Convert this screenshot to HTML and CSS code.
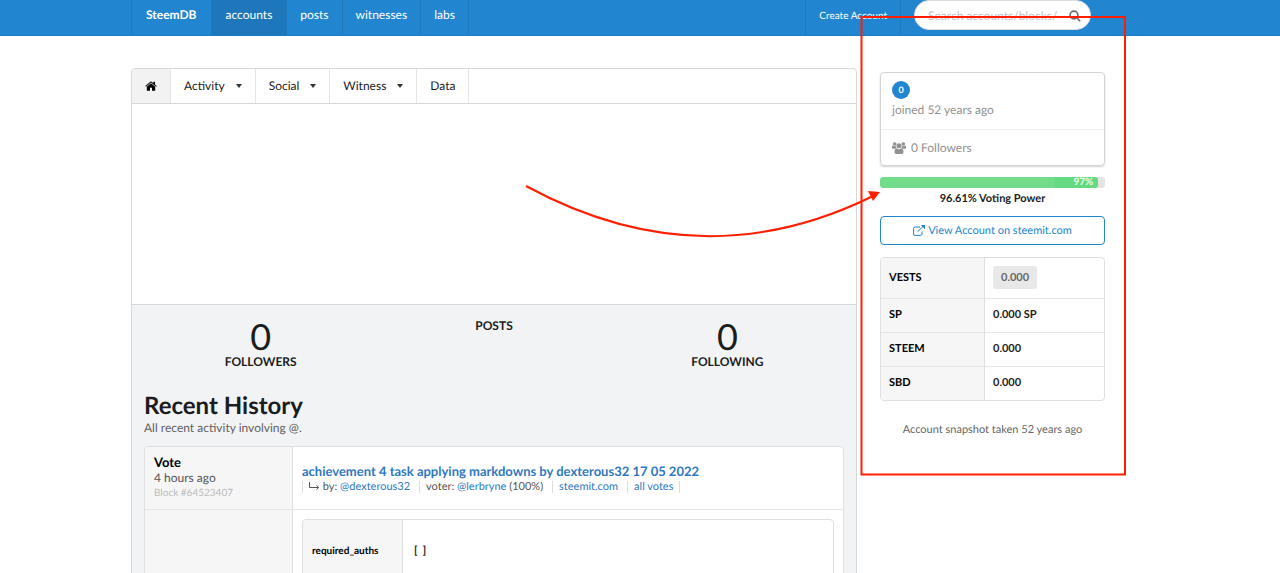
FILE: index.html
```
<!DOCTYPE html>
<html lang="en">
<head>
<meta charset="utf-8">
<title>SteemDB</title>
<link rel="stylesheet" href="styles.css">
</head>
<body>
<div class="page">
  <header class="topbar">
    <nav class="container topnav">
      <a class="nav-item brand" href="#">SteemDB</a>
      <a class="nav-item active" href="#">accounts</a>
      <a class="nav-item" href="#">posts</a>
      <a class="nav-item" href="#">witnesses</a>
      <a class="nav-item" href="#">labs</a>
      <a class="nav-item create" href="#">Create Account</a>
      <form class="search">
        <input class="search-input" type="text" aria-label="Search" placeholder="Search accounts/blocks/transactions">
        <svg class="search-icon" viewBox="0 0 12 12" aria-hidden="true"><circle cx="5" cy="5" r="3.9"/><path d="M8 8l3.2 3.2"/></svg>
      </form>
    </nav>
  </header>

  <div class="container body">
    <main class="main">
      <nav class="tabs">
        <a class="tab home" href="#" aria-label="Home"><svg class="home-icon" viewBox="0 0 12 10" aria-hidden="true"><path d="M6 2.300 10.200 5.800V9.200Q10.200 9.700 9.700 9.700H7V6.800H5V9.700H2.300Q1.800 9.700 1.800 9.200V5.800Z"/><path d="M0.300 5.100 5.300.8Q6 .3 6.700.8L8.400 2.300V.8H10V3.600L11.700 5.100 11.100 5.800 6 1.500.9 5.800Z"/></svg></a>
        <button class="tab" type="button">Activity <span class="caret"></span></button>
        <button class="tab" type="button">Social <span class="caret"></span></button>
        <button class="tab" type="button">Witness <span class="caret"></span></button>
        <a class="tab" href="#">Data</a>
      </nav>
      <div class="hero"></div>
      <section class="content">
        <div class="stats">
          <div class="stat"><span class="value">0</span><span class="label">FOLLOWERS</span></div>
          <div class="stat"><span class="label">POSTS</span></div>
          <div class="stat"><span class="value">0</span><span class="label">FOLLOWING</span></div>
        </div>
        <h1 class="title">Recent History</h1>
        <p class="subtitle">All recent activity involving @.</p>
        <table class="history">
          <tr>
            <th class="when" scope="row">
              <span class="kind">Vote</span>
              <span class="ago">4 hours ago</span>
              <span class="block">Block #64523407</span>
            </th>
            <td class="what">
              <a class="post" href="#">achievement 4 task applying markdowns by dexterous32 17 05 2022</a>
              <div class="meta">
                <span class="meta-item"><svg class="reply-icon" viewBox="0 0 11 8" aria-hidden="true"><path d="M.5 0V5.500H9.500M7.500 3.500l2.300 2-2.300 2"/></svg> by: <a href="#">@dexterous32</a></span>
                <span class="meta-item">voter: <a href="#">@lerbryne</a> (100%)</span>
                <span class="meta-item"><a href="#">steemit.com</a></span>
                <span class="meta-item last"><a href="#">all votes</a></span>
              </div>
            </td>
          </tr>
          <tr>
            <th class="when" scope="row"></th>
            <td class="what detail">
              <table class="params">
                <tr><th scope="row">required_auths</th><td>[&nbsp; ]</td></tr>
              </table>
            </td>
          </tr>
        </table>
      </section>
    </main>

    <aside class="side">
      <section class="card">
        <div class="card-top"><span class="badge">0</span><span>joined 52 years ago</span></div>
        <div class="card-bottom">
          <svg class="users-icon" viewBox="0 0 14 12" aria-hidden="true"><circle cx="2.700" cy="2" r="1.800"/><circle cx="11.300" cy="2" r="1.800"/><circle cx="7" cy="3.800" r="2.500"/><path d="M0 6V5Q0 3.600.8 3.600 2.500 4.600 3.800 3.800 3.800 5 4.600 6Q3.500 6 2.700 6.800H1Q0 6.800 0 6ZM14 6V5Q14 3.600 13.200 3.600 11.500 4.600 10.200 3.800 10.200 5 9.400 6 10.500 6 11.300 6.800H13Q14 6.800 14 6ZM2.500 10.200Q2.500 6.600 4.500 6.300 7 8.100 9.500 6.300 11.500 6.600 11.500 10.200 11.500 12 9.800 12H4.200Q2.500 12 2.500 10.200Z"/></svg>
          0 Followers
        </div>
      </section>
      <div class="progress"><div class="bar" style="width:97%">97%</div></div>
      <p class="power">96.61% Voting Power</p>
      <a class="view" href="#"><svg class="ext-icon" viewBox="0 0 12 11" aria-hidden="true"><path d="M7 2H2Q.6 2 .6 3.400V9Q.6 10.400 2 10.400H7.600Q9 10.400 9 9V6.500M4.500 6.800 10 1.400"/><path class="solid" d="M7.800 0H12V4.200Z"/></svg>View Account on steemit.com</a>
      <table class="balances">
        <tr><th scope="row">VESTS</th><td><span class="chip">0.000</span></td></tr>
        <tr><th scope="row">SP</th><td>0.000 SP</td></tr>
        <tr><th scope="row">STEEM</th><td>0.000</td></tr>
        <tr><th scope="row">SBD</th><td>0.000</td></tr>
      </table>
      <p class="snapshot">Account snapshot taken 52 years ago</p>
    </aside>

    <svg class="annotation" viewBox="0 0 1018 500" aria-hidden="true"><rect x="730.500" y="17" width="263.500" height="457.500"/><path d="M395 186Q570 281 742 196"/><path class="head" d="M749 192 737 191 742 201Z"/></svg>
  </div>
</div>
</body>
</html>
```
FILE: styles.css
```
* { box-sizing: border-box; }
body {
  margin: 0;
  background: #fff;
  color: #1b1c1d;
  font-family: Lato, "Liberation Sans", sans-serif;
  font-size: 13px;
  line-height: 16px;
  text-rendering: geometricPrecision;
}
button, input { text-rendering: inherit; }
a { color: #2f78c2; text-decoration: none; }
p, h1 { margin: 0; }
svg { fill: currentColor; flex: none; }
table { width: 100%; border-collapse: separate; border-spacing: 0; }
.page { position: relative; height: 100vh; overflow: hidden; }
.container { width: 100%; max-width: 1018px; margin: 0 auto; }

.topbar { background: #2185d0; border-bottom: 1px solid #1b7cc8; }
.topnav { display: flex; height: 35px; border-left: 1px solid #1e78bc; }
.nav-item {
  padding: 7px 13px 0;
  color: #fff;
  font-size: 12px;
  border-right: 1px solid #1e78bc;
}
.brand { padding: 7px 14px 0; font-weight: 700; }
.active { padding: 7px 14px 0; background: #1e77ba; }
.create {
  margin-left: auto;
  padding-top: 8px;
  font-size: 10px;
  border-left: 1px solid #1e78bc;
}
.search { position: relative; width: 177px; margin: 0 58px 0 13px; }
.search-input {
  width: 100%;
  height: 30px;
  padding: 0 32px 0 13px;
  border: 1px solid #dcdddf;
  border-radius: 15px;
  background: #fff;
  font: 12px Lato, "Liberation Sans", sans-serif;
}
.search-input::placeholder { color: #c4c4c4; }
.search-icon {
  position: absolute;
  top: 10px;
  right: 10px;
  width: 12px;
  height: 12px;
  fill: none;
  stroke: #6b6b6b;
  stroke-width: 1.6;
}

.body { display: flex; align-items: flex-start; gap: 23px; padding: 32px 44px 0 0; }
.main { flex: 1; min-width: 0; }
.tabs {
  display: flex;
  height: 36px;
  border: 1px solid #d6d7d8;
  border-radius: 4px 4px 0 0;
  overflow: hidden;
}
.tab {
  display: flex;
  align-items: center;
  padding: 0 13px;
  border: 0;
  border-right: 1px solid #e4e4e5;
  background: #fff;
  color: #1b1c1d;
  font: inherit;
  font-size: 12px;
}
.home { background: #f2f2f2; color: #000; }
.home-icon { width: 12px; height: 10px; }
.caret {
  margin-left: 11px;
  border: 3px solid transparent;
  border-top: 4px solid #333;
  border-bottom: 0;
}
.hero { height: 201px; border: solid #d6d7d8; border-width: 0 1px 1px; }
.content {
  padding: 13px 12px 0;
  background: #f2f3f5;
  border: solid #d6d7d8;
  border-width: 0 1px;
}
.stats { display: grid; grid-template-columns: repeat(3, 1fr); text-align: center; }
.stat { display: flex; flex-direction: column; }
.value { font-size: 36px; line-height: 36px; }
.label { font-size: 12px; font-weight: 700; }
.title { margin-top: 21px; font-size: 24px; line-height: 29px; }
.subtitle { font-size: 12px; color: #5f6061; }
.history {
  margin-top: 10px;
  border: 1px solid #dedfe0;
  border-radius: 4px;
  background: #fff;
  overflow: hidden;
}
.when {
  width: 148px;
  padding: 8px 9px;
  background: #f6f6f6;
  border-right: 1px solid #dedfe0;
  text-align: left;
  vertical-align: top;
  font-weight: 400;
}
.kind, .ago, .block { display: block; line-height: 15px; }
.kind { font-weight: 700; color: #000; }
.ago { font-size: 12px; color: #555; }
.block { font-size: 10px; line-height: 16px; color: #bbb; }
.what { padding: 9px; }
.post { display: block; font-weight: 700; }
.meta { display: flex; font-size: 11px; color: #555; }
.meta-item {
  padding: 0 9px 0 6px;
  line-height: 12px;
  border-left: 1px solid #ddd;
  margin-top: 2px;
}
.last { padding-right: 6px; border-right: 1px solid #ddd; }
.reply-icon { width: 11px; height: 8px; fill: none; stroke: #555; }
.detail, .history tr + tr .when { border-top: 1px solid #e6e6e6; }
.params { border: 1px solid #dedfe0; border-radius: 4px; overflow: hidden; }
.params th, .params td { height: 62px; padding: 0 9px; font-size: 10px; text-align: left; }
.params th { width: 100px; background: #f6f6f6; color: #000; border-right: 1px solid #dedfe0; }
.params td { padding-left: 11px; font-size: 11px; font-weight: 700; }

.side { width: 225px; padding-top: 4px; }
.card {
  border: 1px solid #d4d4d5;
  border-radius: 4px;
  box-shadow: 0 1px 2px #d4d4d5;
  color: #919191;
  font-size: 12px;
}
.card-top { display: flex; flex-direction: column; gap: 3px; padding: 8px 11px 11px; }
.badge {
  width: 18px;
  height: 18px;
  border-radius: 50%;
  background: #2185d0;
  color: #fff;
  font-size: 9px;
  font-weight: 700;
  line-height: 18px;
  text-align: center;
}
.card-bottom {
  display: flex;
  align-items: center;
  gap: 5px;
  padding: 10px 11px 9px;
  border-top: 1px solid #f0f0f0;
}
.users-icon { width: 14px; height: 12px; }
.progress { height: 11px; margin-top: 11px; border-radius: 3px; background: #e4e4e4; overflow: hidden; }
.bar {
  height: 11px;
  padding-right: 5px;
  border-radius: 3px;
  background: linear-gradient(90deg, #73dc8a 80%, #66da80 80%);
  color: #eafbee;
  font-size: 10px;
  font-weight: 700;
  line-height: 11px;
  text-align: right;
}
.power { margin-top: 3px; font-size: 11px; font-weight: 700; text-align: center; }
.view {
  display: flex;
  align-items: center;
  justify-content: center;
  gap: 3px;
  height: 29px;
  margin-top: 9px;
  border: 1px solid #2185d0;
  border-radius: 4px;
  color: #2185d0;
  font-size: 11px;
}
.ext-icon { width: 12px; height: 11px; fill: none; stroke: currentColor; }
.solid { fill: currentColor; stroke: none; }
.balances { margin-top: 12px; border: 1px solid #dedfe0; border-radius: 4px; overflow: hidden; font-size: 11px; }
.balances th, .balances td { height: 34px; padding: 8px 8px 9px; text-align: left; font-weight: 700; }
.balances th { width: 104px; background: #f6f6f6; border-right: 1px solid #dedfe0; color: #000; }
.balances tr + tr > * { border-top: 1px solid #e6e6e6; }
.chip {
  display: inline-block;
  padding: 4px 8px 3px;
  border-radius: 3px;
  background: #e8e8e8;
  color: #666;
}
.snapshot { margin-top: 21px; font-size: 11px; color: #666; text-align: center; }

.annotation {
  position: absolute;
  top: 0;
  width: 1018px;
  height: 500px;
  fill: none;
  stroke: #ff1e00;
  stroke-width: 2;
  pointer-events: none;
}
.head { fill: #ff1e00; stroke: none; }
```
